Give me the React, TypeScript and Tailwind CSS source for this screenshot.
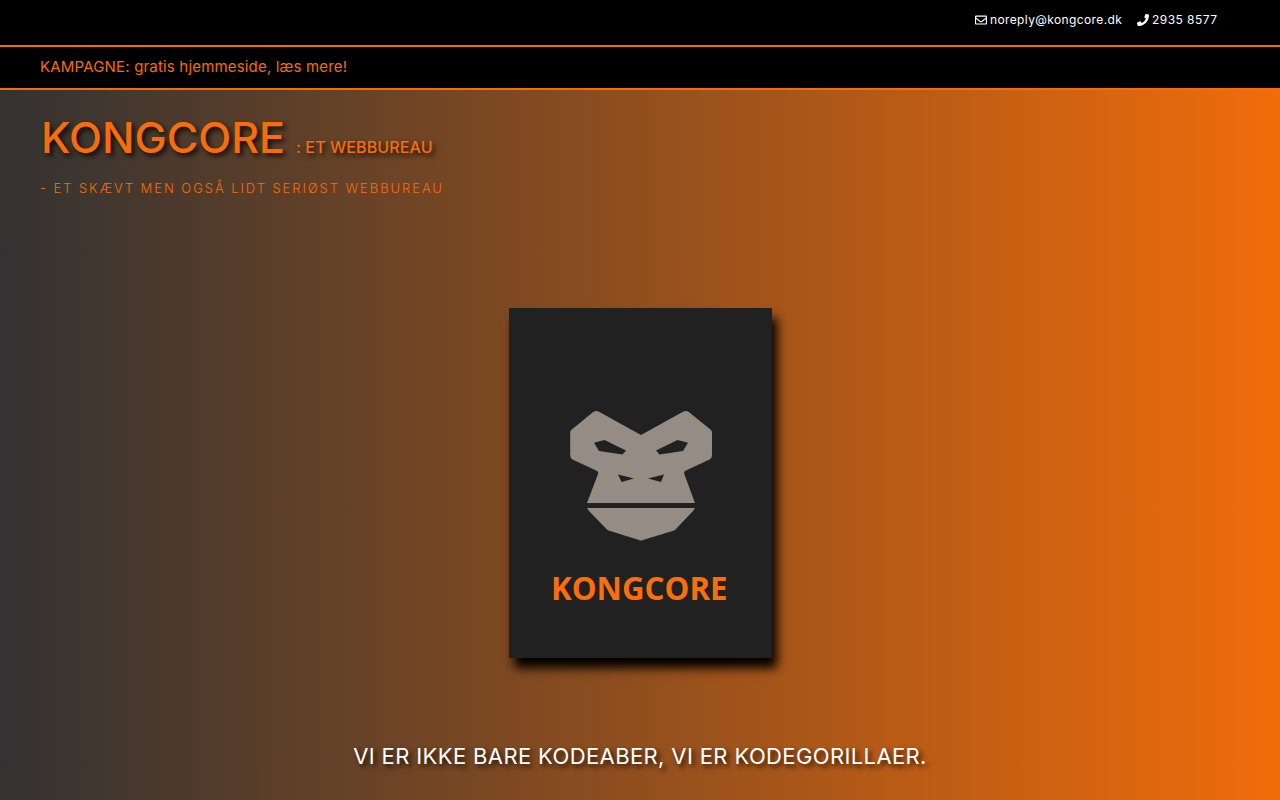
import { FaPhone, FaRegEnvelope } from 'react-icons/fa'

const shadow = '[text-shadow:3px_3px_5px_#000000cc]'

function TopBar() {
    return (
        <div className="flex h-[45px] items-start justify-end bg-black pr-[62px] pt-[10px] text-[12px] leading-5 text-white">
            <a href="mailto:noreply@kongcore.dk" className="flex items-center">
                <FaRegEnvelope className="mr-[3px] size-3" />
                <span className="w-[132px] whitespace-nowrap tracking-[0.38px]">
                    noreply@kongcore.dk
                </span>
            </a>
            <a href="tel:29358577" className="ml-[15px] flex items-center">
                <FaPhone className="mr-[3px] size-3" />
                <span className="w-[66px] whitespace-nowrap tracking-[0.45px]">2935 8577</span>
            </a>
        </div>
    )
}

function Campaign() {
    return (
        <div className="h-[45px] border-y-2 border-[#f56d09] bg-black pl-10 text-[15px] leading-10 text-[#f56d09]">
            <a href="#kampagne" className="tracking-[0.18px]">
                KAMPAGNE: gratis hjemmeside, læs mere!
            </a>
        </div>
    )
}

function Gorilla() {
    return (
        <svg
            viewBox="0 0 263 350"
            className="h-[350px] w-[263px] bg-[#212121] shadow-[5px_10px_10px_#000000]"
        >
            <g fill="#958d85">
                <path d="M61.2 124.5 Q61.2 122.8 62.5 121.7 L84.5 103.8 Q87 102 90 103.8 L132 127 L174 103.8 Q177 102 179.5 103.8 L201.5 121.5 Q203 122.8 203 124.5 V147 Q203 150 200.5 151.5 L177 162.5 Q174.5 163.5 175.3 166 L186 195 H78 L89 166 Q89.8 163.5 87 162.5 L63.5 151.5 Q61.2 150 61.2 147 Z" />
                <path d="M78 200 H186 L184 203 L166.5 221.5 L165 222.5 L134 232 Q132 233 130 232 L99.5 222.5 L98 221.5 L80 203 Z" />
            </g>
            <g fill="#212121">
                <path d="M85 134.7 L95.5 132 L117 142.5 L113.5 146.5 L90 143 Z" />
                <path d="M179 134.7 L168.5 132 L147 142.5 L150.5 146.5 L174 143 Z" />
                <path d="M109 166.5 L125 170.5 L112.5 174 Z" />
                <path d="M155 166.5 L139 170.5 L152 174 Z" />
            </g>
            <text
                x="42"
                y="292"
                textLength="176.5"
                lengthAdjust="spacingAndGlyphs"
                fill="#fb6e0c"
                className="font-['Open_Sans',sans-serif] text-[33px] font-bold"
            >
                KONGCORE
            </text>
        </svg>
    )
}

export default function App() {
    return (
        <div className="h-screen overflow-hidden bg-linear-to-r/srgb from-[#323232] to-[#f16c0a] font-['Inter',sans-serif]">
            <TopBar />
            <Campaign />
            <header className="h-[218px] pl-10 pt-[21px] text-[#f76d09]">
                <h1 className={`flex items-baseline whitespace-nowrap font-medium ${shadow}`}>
                    <span className="w-[256px] pl-px text-[43px] leading-[52px]">KONGCORE</span>
                    <span className="text-[16px] tracking-[0.12px]">: ET WEBBUREAU</span>
                </h1>
                <p className="mt-[15px] text-[13px] font-light leading-5 tracking-[1.94px]">
                    - ET SKÆVT MEN OGSÅ LIDT SERIØST WEBBUREAU
                </p>
            </header>
            <main className="flex flex-col items-center">
                <Gorilla />
                <h2
                    className={`mt-[82px] whitespace-nowrap text-[22px] leading-8 tracking-[0.38px] text-white ${shadow}`}
                >
                    VI ER IKKE BARE KODEABER, VI ER KODEGORILLAER.
                </h2>
            </main>
        </div>
    )
}
